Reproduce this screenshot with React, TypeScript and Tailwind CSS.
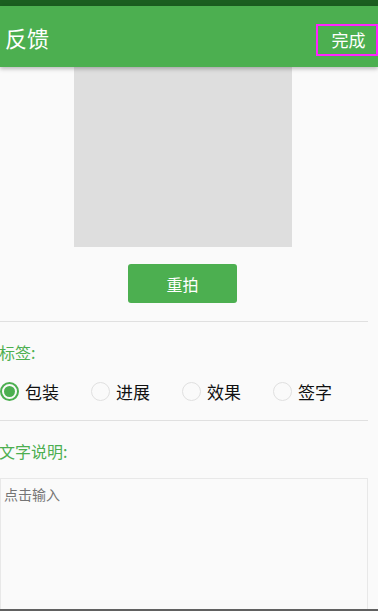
const tags = ["包装", "进展", "效果", "签字"];

const Radio = ({ label, checked }: { label: string; checked?: boolean }) => {
  return (
    <div className="flex items-center gap-[6px]">
      <div
        className={
          checked
            ? "flex h-[19px] w-[19px] items-center justify-center rounded-full border-2 border-[#4caf50]"
            : "h-[19px] w-[19px] rounded-full border border-[#e0e0e0]"
        }
      >
        {checked && <div className="h-[11px] w-[11px] rounded-full bg-[#4caf50]" />}
      </div>
      <span className="text-[17px] leading-none text-[#111]">{label}</span>
    </div>
  );
};

export default function App() {
  return (
    <div
      className="relative flex h-[611px] w-[378px] flex-col overflow-hidden bg-[#fafafa]"
      style={{ fontFamily: '"Noto Sans CJK SC", "Noto Sans", sans-serif' }}
    >
      <div className="h-[6px] shrink-0 bg-[#1b5e20]" />
      <div className="relative z-10 flex h-[61px] shrink-0 items-center justify-between bg-[#4caf50] pl-[5px] shadow-[0_2px_4px_rgba(0,0,0,0.25)]">
        <span className="text-[22px] leading-none text-white">反馈</span>
        <div className="mt-[6px] flex h-[32px] w-[62px] items-center justify-center border-2 border-[#ff22ff] pl-[3px]">
          <span className="text-[17px] leading-none text-white">完成</span>
        </div>
      </div>

      <div className="flex shrink-0 flex-col">
        <div className="ml-[74px] h-[180px] w-[218px] bg-[#dedede]" />
        <button className="mt-[17px] ml-[128px] h-[39px] w-[109px] rounded-[3px] bg-[#4caf50] text-[16px] text-white">
          重拍
        </button>
        <div className="mt-[18px] h-px w-[368px] bg-[#e0e0e0]" />
        <div className="mt-[22px] -ml-[1px] text-[16px] leading-none text-[#4caf50]">标签:</div>
        <div className="mt-[22px] flex gap-[32px]">
          {tags.map((t, i) => (
            <Radio key={i} label={t} checked={i === 0} />
          ))}
        </div>
        <div className="mt-[19px] h-px w-[368px] bg-[#e0e0e0]" />
        <div className="mt-[22px] -ml-[1px] text-[16px] leading-none text-[#4caf50]">文字说明:</div>
        <div className="mt-[19px] h-[140px] w-[368px] border border-[#e8e8e8] pl-[3px] pt-[2px]">
          <span className="text-[14px] leading-none text-[#757575]">点击输入</span>
        </div>
      </div>
      <div className="absolute bottom-0 left-0 h-[2px] w-full bg-[#616161]" />
    </div>
  );
}
